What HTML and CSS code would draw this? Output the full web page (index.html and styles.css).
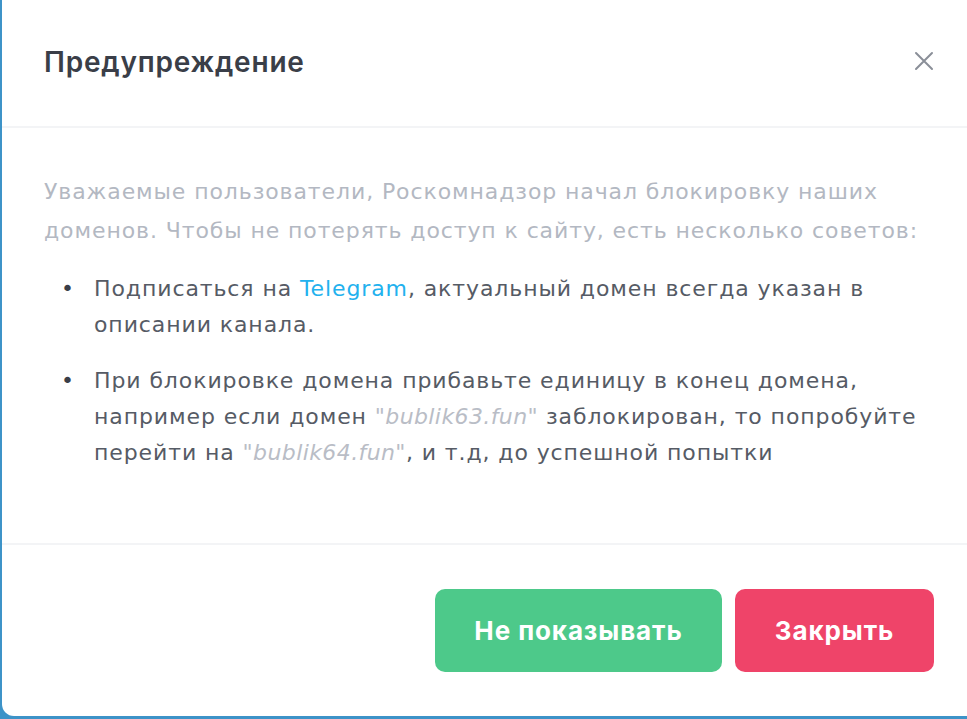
FILE: index.html
```html
<!DOCTYPE html>
<html lang="ru">
<head>
    <meta charset="UTF-8">
    <meta name="viewport" content="width=device-width, initial-scale=1.0">
    <title>Предупреждение</title>
    <link rel="stylesheet" href="styles.css">
</head>
<body>
<div class="modal">
    <div class="modal-header">
        <h1>Предупреждение</h1>
        <button class="close" aria-label="Закрыть">
            <svg width="22" height="22" viewBox="0 0 22 22"><path d="M3 3L19 19M19 3L3 19" stroke="#8a8f98" stroke-width="2" stroke-linecap="round"/></svg>
        </button>
    </div>
    <div class="modal-body">
        <p class="intro">Уважаемые пользователи, Роскомнадзор начал блокировку наших доменов. Чтобы не потерять доступ к сайту, есть несколько советов:</p>
        <ul>
            <li>Подписаться на <a href="#">Telegram</a>, актуальный домен всегда указан в описании канала.</li>
            <li>При блокировке домена прибавьте единицу в конец домена, например если домен <em>"bublik63.fun"</em> заблокирован, то попробуйте перейти на <em>"bublik64.fun"</em>, и т.д, до успешной попытки</li>
        </ul>
    </div>
    <div class="modal-footer">
        <button class="btn btn-green">Не показывать</button>
        <button class="btn btn-red">Закрыть</button>
    </div>
</div>
</body>
</html>
```

FILE: styles.css
```css
body {
    font-family: "DejaVu Sans", Verdana, sans-serif;
    background: #3d93c8;
    margin: 0;
    padding: 0 0 3px 2px;
}
.modal {
    background: #fff;
    height: 716px;
    border-radius: 0 0 0 12px;
    display: flex;
    flex-direction: column;
}
.modal-header {
    height: 126px;
    display: flex;
    align-items: center;
    justify-content: space-between;
    padding: 0 28px 0 42px;
    border-bottom: 2px solid #f3f4f6;
}
.modal-header h1 {
    margin: 0 0 2px;
    font-family: Inter, "Noto Sans", sans-serif;
    font-size: 28px;
    font-weight: 600;
    letter-spacing: 0.8px;
    color: #3a3e48;
}
.close {
    background: none;
    border: none;
    padding: 4px;
    margin-bottom: 4px;
    display: flex;
    cursor: pointer;
}
.modal-body {
    flex: 1;
    padding: 44px 30px 0 42px;
    border-bottom: 2px solid #f3f4f6;
}
.intro {
    margin: 0 0 21px;
    font-size: 22px;
    line-height: 39px;
    letter-spacing: 0.9px;
    color: #b3b8c2;
}
ul {
    margin: 0;
    padding-left: 50px;
    list-style: none;
}
li {
    font-size: 22px;
    line-height: 36px;
    letter-spacing: 0.9px;
    color: #565b65;
    margin-bottom: 20px;
}
li::before {
    content: "•";
    display: inline-block;
    width: 33px;
    margin-left: -33px;
    color: #3a3e48;
}
li a {
    color: #22b1ee;
    text-decoration: none;
}
li em {
    color: #b9bdc6;
    letter-spacing: 0.4px;
}
.modal-footer {
    height: 171px;
    display: flex;
    align-items: center;
    justify-content: flex-end;
    gap: 13px;
    padding-right: 33px;
}
.btn {
    height: 83px;
    border: none;
    border-radius: 10px;
    color: #fff;
    font-family: Inter, "Noto Sans", sans-serif;
    font-size: 26px;
    font-weight: 700;
    letter-spacing: 0.9px;
    cursor: pointer;
}
.btn-green {
    width: 287px;
    background: #4dc98a;
}
.btn-red {
    width: 199px;
    background: #ef4469;
}
```
